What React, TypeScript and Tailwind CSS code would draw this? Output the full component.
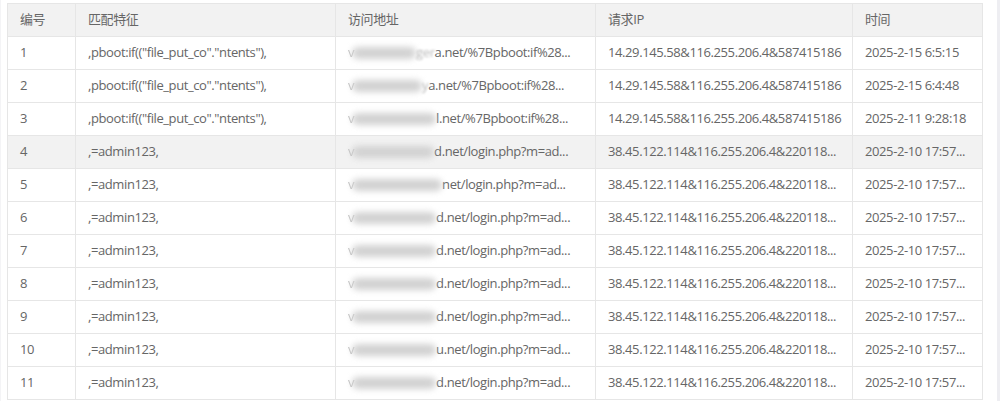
import React from 'react';

type Row = {
  id: number;
  rule: string;
  blob: number;
  lead?: string;
  url: string;
  ip: string;
  time: string;
  hover?: boolean;
};

const pboot = ',pboot:if(("file_put_co"."ntents"),';
const admin = ',=admin123,';
const loginUrl = '.net/login.php?m=ad...';
const loginIp = '38.45.122.114&116.255.206.4&220118...';
const lastTime = '2025-2-10 17:57...';

const rows: Row[] = [
  { id: 1, rule: pboot, blob: 60, lead: 'ger', url: 'a.net/%7Bpboot:if%28...', ip: '14.29.145.58&116.255.206.4&587415186', time: '2025-2-15 6:5:15' },
  { id: 2, rule: pboot, blob: 66, lead: 'y', url: 'a.net/%7Bpboot:if%28...', ip: '14.29.145.58&116.255.206.4&587415186', time: '2025-2-15 6:4:48' },
  { id: 3, rule: pboot, blob: 80, url: 'l.net/%7Bpboot:if%28...', ip: '14.29.145.58&116.255.206.4&587415186', time: '2025-2-11 9:28:18' },
  { id: 4, rule: admin, blob: 78, url: 'd' + loginUrl, ip: loginIp, time: lastTime, hover: true },
  { id: 5, rule: admin, blob: 86, url: loginUrl.slice(1), ip: loginIp, time: lastTime },
  { id: 6, rule: admin, blob: 80, url: 'd' + loginUrl, ip: loginIp, time: lastTime },
  { id: 7, rule: admin, blob: 80, url: 'd' + loginUrl, ip: loginIp, time: lastTime },
  { id: 8, rule: admin, blob: 80, url: 'd' + loginUrl, ip: loginIp, time: lastTime },
  { id: 9, rule: admin, blob: 80, url: 'd' + loginUrl, ip: loginIp, time: lastTime },
  { id: 10, rule: admin, blob: 80, url: 'u' + loginUrl, ip: loginIp, time: lastTime },
  { id: 11, rule: admin, blob: 80, url: 'd' + loginUrl, ip: loginIp, time: lastTime },
];

const cell = 'border border-[#e6e6e6] px-[12px] py-0 text-left font-normal whitespace-nowrap overflow-hidden';

const App = () => {
  return (
    <div
      className="w-[1000px] h-[401px] bg-white overflow-hidden flex text-[13px] text-[#666] tracking-[-0.4px]"
      style={{ fontFamily: '"Open Sans", "Noto Sans CJK SC", sans-serif' }}
    >
      <div className="w-px h-full bg-[#f4f4f6]" />
      <div className="pl-[6px] pt-[3px]">
        <table className="table-fixed border-collapse w-[975px]">
          <colgroup>
            <col className="w-[68px]" />
            <col className="w-[260px]" />
            <col className="w-[260px]" />
            <col className="w-[257px]" />
            <col className="w-[130px]" />
          </colgroup>
          <thead>
            <tr className="h-[33px] bg-[#f2f2f2]">
              <th className={cell}>编号</th>
              <th className={cell}>匹配特征</th>
              <th className={cell}>访问地址</th>
              <th className={cell}>请求IP</th>
              <th className={cell}>时间</th>
            </tr>
          </thead>
          <tbody>
            {rows.map((r) => (
              <tr key={r.id} className={r.hover ? 'h-[33px] bg-[#f2f2f2]' : 'h-[33px]'}>
                <td className={cell}>{r.id}</td>
                <td className={cell}>{r.rule}</td>
                <td className={cell}>
                  <div className="flex items-center">
                    <span className="text-[#c4c4c4] blur-[0.6px]">v</span>
                    <span
                      className="inline-block h-[12px] -ml-[2px] bg-[#d2d2d2] blur-[3px] rounded-full"
                      style={{ width: r.blob + 4 }}
                    />
                    {r.lead && <span className="text-[#bdbdbd] blur-[1px]">{r.lead}</span>}
                    <span>{r.url}</span>
                  </div>
                </td>
                <td className={cell}>{r.ip}</td>
                <td className={cell}>{r.time}</td>
              </tr>
            ))}
          </tbody>
        </table>
      </div>
      <div className="ml-auto w-[3px] h-full bg-[#eeeef2]" />
    </div>
  );
};

export default App;
